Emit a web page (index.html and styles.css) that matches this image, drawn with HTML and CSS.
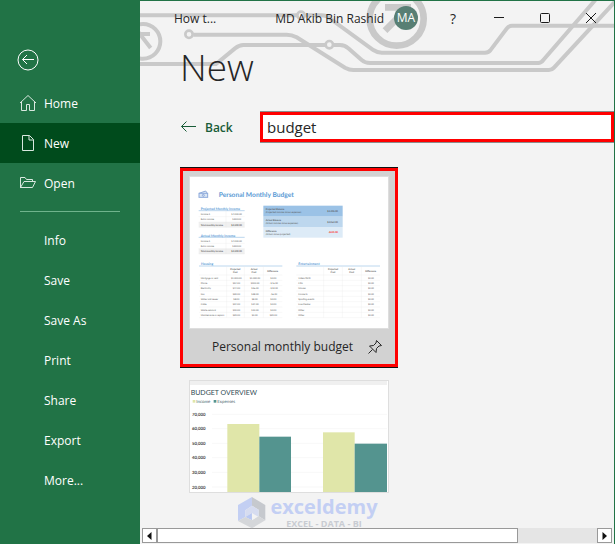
FILE: index.html
```html
<!DOCTYPE html>
<html lang="en">

<head>
  <meta charset="utf-8">
  <title>New - Excel</title>
  <link rel="stylesheet" href="styles.css">
</head>

<body>
  <nav class="sidebar">
    <button class="back-circle" aria-label="Back">
      <svg width="22" height="22" viewBox="0 0 22 22">
        <circle cx="11" cy="11" r="10" />
        <path d="M17 10.500H5.500M10 6L5.500 10.500L10 15" />
      </svg>
    </button>

    <a class="item" href="#">
      <svg width="18" height="18" viewBox="0 0 18 18">
        <path d="M2.500 7.500V16.500H7.500V10.500H10.500V16.500H15.500V7.500M1 9L9 1.500L17 9" />
      </svg>
      Home
    </a>
    <a class="item active" href="#">
      <svg width="18" height="18" viewBox="0 0 18 18">
        <path d="M3.500 1.500H10.500L14.500 5.500V16.500H3.500ZM10 1.500V6H14.500" />
      </svg>
      New
    </a>
    <a class="item" href="#">
      <svg width="18" height="18" viewBox="0 0 18 18">
        <path d="M1.500 14V3.500H6L7.500 5.500H13.500V7.500M1.500 13.500L5 7.500H16.500L13.500 13.500H1.500" />
      </svg>
      Open
    </a>
    <hr>
    <a class="item plain" href="#">Info</a>
    <a class="item plain" href="#">Save</a>
    <a class="item plain" href="#">Save As</a>
    <a class="item plain" href="#">Print</a>
    <a class="item plain" href="#">Share</a>
    <a class="item plain" href="#">Export</a>
    <a class="item plain" href="#">More...</a>
  </nav>

  <main class="main">
    <!-- circuit board decoration behind the title bar -->
    <svg class="circuit" width="475" height="75" viewBox="0 0 1425 225" aria-hidden="true">
      <g stroke-width="12">
        <path d="M0 46H471M496 46H545Q560 46 572 57L700 150Q712 158 725 158H1035Q1045 158 1051 151L1100 86Q1106 77 1116 77H1425" />
        <path d="M160 104H440Q455 104 470 112L615 203Q628 210 640 210H1227Q1236 210 1242 203L1425 5" />
        <path d="M0 192H228L285 145Q298 135 310 135H555M581 135H600Q615 135 625 145L665 180Q675 189 690 189H1195Q1203 189 1210 180L1366 0" />
        <circle cx="9" cy="124" r="52" />
        <path d="M-5 102H30M-5 96L32 144" />
      </g>
      <g stroke-width="8">
        <circle cx="147" cy="103" r="11" />
        <circle cx="483" cy="46" r="11" />
        <circle cx="568" cy="134" r="11" />
      </g>
      <g stroke-width="20">
        <circle cx="770" cy="56" r="81" />
        <path d="M735 22H813M735 92L805 22" />
      </g>
    </svg>

    <header class="titlebar">
      <span class="doc-name">How t...</span>
      <span class="user">MD Akib Bin Rashid</span>
      <span class="avatar">MA</span>
      <button class="win help" aria-label="Help">?</button>
      <button class="win" aria-label="Minimize">
        <svg width="12" height="12" viewBox="0 0 12 12"><path d="M1 5.500H11" /></svg>
      </button>
      <button class="win" aria-label="Maximize">
        <svg width="12" height="12" viewBox="0 0 12 12"><rect x="1.500" y="1.500" width="9" height="9" rx="1" /></svg>
      </button>
      <button class="win" aria-label="Close">
        <svg width="12" height="12" viewBox="0 0 12 12"><path d="M1 1L11 11M11 1L1 11" /></svg>
      </button>
    </header>

    <h1>New</h1>

    <div class="search-row">
      <a class="back" href="#">
        <svg width="16" height="12" viewBox="0 0 16 12"><path d="M16 5.500H1.500M6.500 0.500L1.500 5.500L6.500 10.500" /></svg>
        Back
      </a>
      <input type="text" class="search" aria-label="Search for online templates" value="budget">
    </div>

    <section class="templates">
      <article class="card selected">
        <svg class="thumb" viewBox="0 0 600 459" role="img" aria-label="Personal Monthly Budget preview">
          <g class="money">
            <path d="M30 52L50 45L55 52" />
            <rect x="30" y="52" width="26" height="12" />
            <circle cx="43" cy="58" r="3" />
          </g>
          <text class="sheet-title" x="89" y="63">Personal Monthly Budget</text>

          <rect x="223" y="89" width="238" height="33" fill="#9bc2e6" />
          <rect x="223" y="122" width="238" height="31" fill="#bdd7ee" />
          <rect x="223" y="153" width="238" height="32" fill="#ddebf7" />
          <rect x="29" y="138" width="138" height="16" fill="#f0f0f0" />
          <rect x="29" y="218" width="138" height="16" fill="#f0f0f0" />

          <path class="rule" d="M29 104H167M29 184H167M30 270H280M322 270H573" />
          <path class="grid" d="M29 122H167M29 138H167M29 154H167M111 104V154M29 202H167M29 218H167M29 234H167M111 184V234" />
          <path class="grid" d="M30 297H280M30 313H280M30 329H280M30 345H280M30 361H280M30 377H280M30 393H280M30 409H280M30 425H280M113 271V425M166 271V425M223 271V425" />
          <path class="grid" d="M322 297H573M322 313H573M322 329H573M322 345H573M322 361H573M322 377H573M322 393H573M322 409H573M322 425H573M404 271V425M460 271V425M517 271V425" />

          <g class="sheet-head">
            <text x="35" y="101">Projected Monthly Income</text>
            <text x="35" y="182">Actual Monthly Income</text>
            <text x="36" y="267">Housing</text>
            <text x="328" y="267">Entertainment</text>
          </g>

          <g class="cells">
            <text x="35" y="116">Income 1<tspan x="127">$4,000.00</tspan></text>
            <text x="35" y="133">Extra income<tspan x="130">$300.00</tspan></text>
            <text class="strong" x="35" y="149">Total monthly income<tspan x="127">$4,300.00</tspan></text>
            <text x="35" y="197">Income 1<tspan x="127">$4,000.00</tspan></text>
            <text x="35" y="213">Extra income<tspan x="130">$300.00</tspan></text>
            <text class="strong" x="35" y="229">Total monthly income<tspan x="127">$4,300.00</tspan></text>

            <text class="strong" x="230" y="103">Projected Balance</text>
            <text x="230" y="112">(Projected income minus expenses)<tspan class="strong" x="415" y="108">$3,405.00</tspan></text>
            <text class="strong" x="230" y="136">Actual Balance</text>
            <text x="230" y="145">(Actual income minus expenses)<tspan class="strong" x="415" y="140">$3,064.00</tspan></text>
            <text class="strong" x="230" y="169">Difference</text>
            <text x="230" y="178">(Actual minus projected)<tspan class="strong negative" x="418" y="172">-$341.00</tspan></text>
          </g>

          <g class="cells strong centered">
            <text x="139" y="282">Projected<tspan x="139" y="292">Cost</tspan></text>
            <text x="195" y="282">Actual<tspan x="195" y="292">Cost</tspan></text>
            <text x="251" y="287">Difference</text>
            <text x="432" y="282">Projected<tspan x="432" y="292">Cost</tspan></text>
            <text x="488" y="282">Actual<tspan x="488" y="292">Cost</tspan></text>
            <text x="545" y="287">Difference</text>
          </g>

          <g class="cells">
            <text x="35" y="308">Mortgage or rent<tspan x="126">$1,000.00</tspan><tspan x="182">$1,000.00</tspan><tspan x="244">$0.00</tspan></text>
            <text x="35" y="324">Phone<tspan x="131">$54.00</tspan><tspan x="185">$100.00</tspan><tspan x="242">-$46.00</tspan></text>
            <text x="35" y="340">Electricity<tspan x="131">$44.00</tspan><tspan x="187">$56.00</tspan><tspan x="242">-$12.00</tspan></text>
            <text x="35" y="356">Gas<tspan x="131">$22.00</tspan><tspan x="187">$28.00</tspan><tspan x="244">-$6.00</tspan></text>
            <text x="35" y="372">Water and sewer<tspan x="133">$8.00</tspan><tspan x="188">$8.00</tspan><tspan x="244">$0.00</tspan></text>
            <text x="35" y="388">Cable<tspan x="131">$34.00</tspan><tspan x="187">$34.00</tspan><tspan x="244">$0.00</tspan></text>
            <text x="35" y="404">Waste removal<tspan x="131">$10.00</tspan><tspan x="187">$10.00</tspan><tspan x="244">$0.00</tspan></text>
            <text x="35" y="420">Maintenance or repairs<tspan x="131">$23.00</tspan><tspan x="188">$0.00</tspan><tspan x="242">$23.00</tspan></text>

            <text x="328" y="308">Video/DVD<tspan x="537">$0.00</tspan></text>
            <text x="328" y="324">CDs<tspan x="537">$0.00</tspan></text>
            <text x="328" y="340">Movies<tspan x="537">$0.00</tspan></text>
            <text x="328" y="356">Concerts<tspan x="537">$0.00</tspan></text>
            <text x="328" y="372">Sporting events<tspan x="537">$0.00</tspan></text>
            <text x="328" y="388">Live theater<tspan x="537">$0.00</tspan></text>
            <text x="328" y="404">Other<tspan x="537">$0.00</tspan></text>
            <text x="328" y="420">Other<tspan x="537">$0.00</tspan></text>
          </g>
        </svg>
        <div class="card-label">
          <span>Personal monthly budget</span>
          <button class="pin" aria-label="Pin to list">
            <svg width="16" height="16" viewBox="0 0 16 16">
              <path d="M9.500 1.500L14.500 6.500L12 7L9.500 9.500L9 13.500L2.500 7L6.500 6.500L9 4ZM5.500 10.500L1.500 14.500" />
            </svg>
          </button>
        </div>
      </article>

      <article class="card">
        <svg class="thumb" viewBox="0 0 600 339" role="img" aria-label="Budget overview chart preview">
          <rect x="3" y="3" width="591" height="12" fill="#f0f0f0" />
          <text class="chart-title" x="5" y="44">BUDGET OVERVIEW</text>
          <g class="legend">
            <rect x="11" y="60" width="8" height="8" fill="#e0e6a9" />
            <text x="22" y="68">Income</text>
            <rect x="74" y="60" width="8" height="8" fill="#54948f" />
            <text x="85" y="68">Expenses</text>
          </g>
          <path class="grid" d="M69 103H594M69 146H594M69 190H594M69 233H594M69 277H594M69 321H594" />
          <g class="axis">
            <text x="9" y="108">70,000</text>
            <text x="9" y="151">60,000</text>
            <text x="9" y="195">50,000</text>
            <text x="9" y="238">40,000</text>
            <text x="9" y="282">30,000</text>
            <text x="9" y="326">20,000</text>
          </g>
          <rect x="115" y="132" width="96" height="207" fill="#e0e6a9" />
          <rect x="211" y="170" width="95" height="169" fill="#54948f" />
          <rect x="402" y="157" width="95" height="182" fill="#e0e6a9" />
          <rect x="497" y="191" width="97" height="148" fill="#54948f" />
        </svg>
      </article>
    </section>

    <div class="scrollbar">
      <button aria-label="Scroll left"><svg width="5" height="8" viewBox="0 0 5 8"><path d="M4.500 0V8L0 4Z" /></svg></button>
      <div class="track"><div class="handle"></div></div>
      <button aria-label="Scroll right"><svg width="5" height="8" viewBox="0 0 5 8"><path d="M0.500 0V8L5 4Z" /></svg></button>
    </div>
  </main>

  <div class="watermark">
    <svg width="28" height="32" viewBox="0 0 84 96" aria-hidden="true">
      <path fill="#c3cff3" d="M42 0L0 24V72L22 60V40L42 26Z" />
      <path fill="#c6c9ce" d="M42 0L82 24V70L62 58V38L42 26Z" />
      <path fill="#d6dcf0" d="M42 26L62 38V60L42 48L22 60V40Z" />
      <path fill="#b9c8f2" d="M22 60L42 48V70Z" />
      <path fill="#d5d7da" d="M0 72L22 60L42 70L62 58L82 70L42 94Z" />
    </svg>
    <div>
      <p class="brand">exceldemy</p>
      <p class="tagline">EXCEL - DATA - BI</p>
    </div>
  </div>
</body>

</html>
```
FILE: styles.css
```css
:root {
  --green: #217346;
  --green-dark: #004b1c;
  --bg: #f3f3f3;
  --line: #c9c9c9;
  --text: #262626;
  --red: #ff0000;
}

* {
  box-sizing: border-box;
  margin: 0;
  padding: 0;
}

body {
  display: flex;
  min-height: 100vh;
  position: relative;
  font-family: 'Open Sans', 'Noto Sans', sans-serif;
  font-size: 12px;
  color: var(--text);
  background: var(--bg);
}

button {
  background: none;
  border: none;
  font: inherit;
  color: inherit;
}

a {
  color: inherit;
  text-decoration: none;
}

svg {
  display: block;
  fill: none;
}

/* sidebar */
.sidebar {
  width: 140px;
  flex-shrink: 0;
  padding-top: 49px;
  background: var(--green);
  color: white;
}

.back-circle {
  display: block;
  margin: 0 0 12px 17px;
}

.sidebar svg {
  stroke: white;
}

.item svg {
  stroke: #d9e8df;
}

.item {
  display: flex;
  align-items: center;
  gap: 7px;
  height: 40px;
  padding-left: 19px;
  font-weight: 500;
}

.item.active {
  background: var(--green-dark);
}

.item.plain {
  padding-left: 44px;
}

.sidebar hr {
  margin: 8px 20px;
  border: none;
  border-top: 1px solid #6fb38c;
}

/* main area */
.main {
  flex: 1;
  min-width: 0;
  display: flex;
  flex-direction: column;
  position: relative;
  border-top: 1px solid var(--green);
  border-right: 1px solid var(--green);
  overflow: hidden;
}

.circuit {
  position: absolute;
  top: -1px;
  left: 0;
  stroke: var(--line);
}

.titlebar {
  display: flex;
  align-items: center;
  height: 34px;
  padding-left: 34px;
  position: relative;
}

.user {
  margin-left: auto;
}

.avatar {
  width: 24px;
  height: 24px;
  margin: 0 12px 0 10px;
  border-radius: 50%;
  background: #587f74;
  color: white;
  line-height: 24px;
  text-align: center;
}

.win {
  display: flex;
  align-items: center;
  justify-content: center;
  width: 46px;
  height: 32px;
}

.win svg {
  stroke: #1a1a1a;
}

.help {
  font-size: 14px;
}

h1 {
  position: relative;
  padding-left: 40px;
  font-size: 37px;
  font-weight: 300;
  line-height: 64px;
}

.search-row {
  display: flex;
  align-items: center;
  margin-top: 13px;
  padding-left: 40px;
}

.back {
  display: flex;
  align-items: center;
  gap: 9px;
  width: 80px;
  color: #185c37;
  font-weight: 600;
}

.back svg {
  stroke: #185c37;
}

.search {
  flex: 1;
  min-width: 0;
  height: 30px;
  padding: 0 4px;
  border: 3px solid var(--red);
  background: white;
  box-shadow: 0 -1px #8c8c8c, 0 1px #8c8c8c;
  color: var(--text);
  font: 15px 'Open Sans', 'Noto Sans', sans-serif;
  outline: none;
}

/* template list */
.templates {
  flex: 1;
  padding: 26px 40px 0;
}

.card {
  width: 218px;
  padding: 0 9px;
}

.card.selected {
  margin-bottom: 13px;
  padding: 5px 6px 0;
  border: 3px solid var(--red);
  background: #d2d2d2;
  box-shadow: 0 -1px #111, 0 1px #111;
}

.thumb {
  width: 100%;
  background: white;
  outline: 1px solid #dedede;
  outline-offset: -1px;
  text-rendering: geometricPrecision;
}

.card-label {
  display: flex;
  align-items: center;
  justify-content: flex-end;
  gap: 14px;
  height: 35px;
  padding-right: 6px;
  font-weight: 500;
}

.pin svg {
  stroke: var(--text);
}

/* worksheet preview */
.thumb text {
  font-family: Lato, 'Open Sans', sans-serif;
}

.thumb .sheet-title {
  font-size: 20px;
  font-weight: 700;
  fill: #5b9bd5;
}

.money {
  fill: #dbe7f5;
  stroke: #8eaadb;
  stroke-width: 3;
}

.sheet-head {
  font-size: 10px;
  font-weight: 700;
  fill: #5b9bd5;
}

.cells {
  font-size: 7px;
  fill: #555;
}

.strong {
  font-weight: 700;
}

.centered {
  text-anchor: middle;
}

.negative {
  fill: var(--red);
}

.rule {
  stroke: #9bc2e6;
  stroke-width: 2;
}

.grid {
  stroke: #e6e6e6;
}

/* chart preview */
.chart-title {
  font-size: 21px;
  fill: #2f4b52;
}

.legend {
  font-size: 13px;
  fill: #44646a;
}

.axis {
  font-size: 13px;
  font-weight: 700;
  fill: #444;
}

/* horizontal scrollbar */
.scrollbar {
  display: flex;
  height: 15px;
  margin: 0 2px 1px;
  background: #e5e5e5;
}

.scrollbar button {
  display: flex;
  align-items: center;
  justify-content: center;
  width: 15px;
  border: 1px solid #999;
  background: white;
}

.scrollbar path {
  fill: #111;
}

.track {
  flex: 1;
}

.handle {
  width: 82%;
  height: 100%;
  border: 1px solid #999;
  background: white;
}

.watermark {
  position: absolute;
  bottom: 14px;
  left: 50%;
  transform: translateX(-50%);
  display: flex;
  align-items: center;
  gap: 5px;
}

.brand {
  font: 700 20px/22px 'Open Sans', sans-serif;
  color: #c3cff3;
}

.tagline {
  font: 700 9px/12px 'Open Sans', sans-serif;
  color: #c9ccd2;
  text-align: center;
}
```
